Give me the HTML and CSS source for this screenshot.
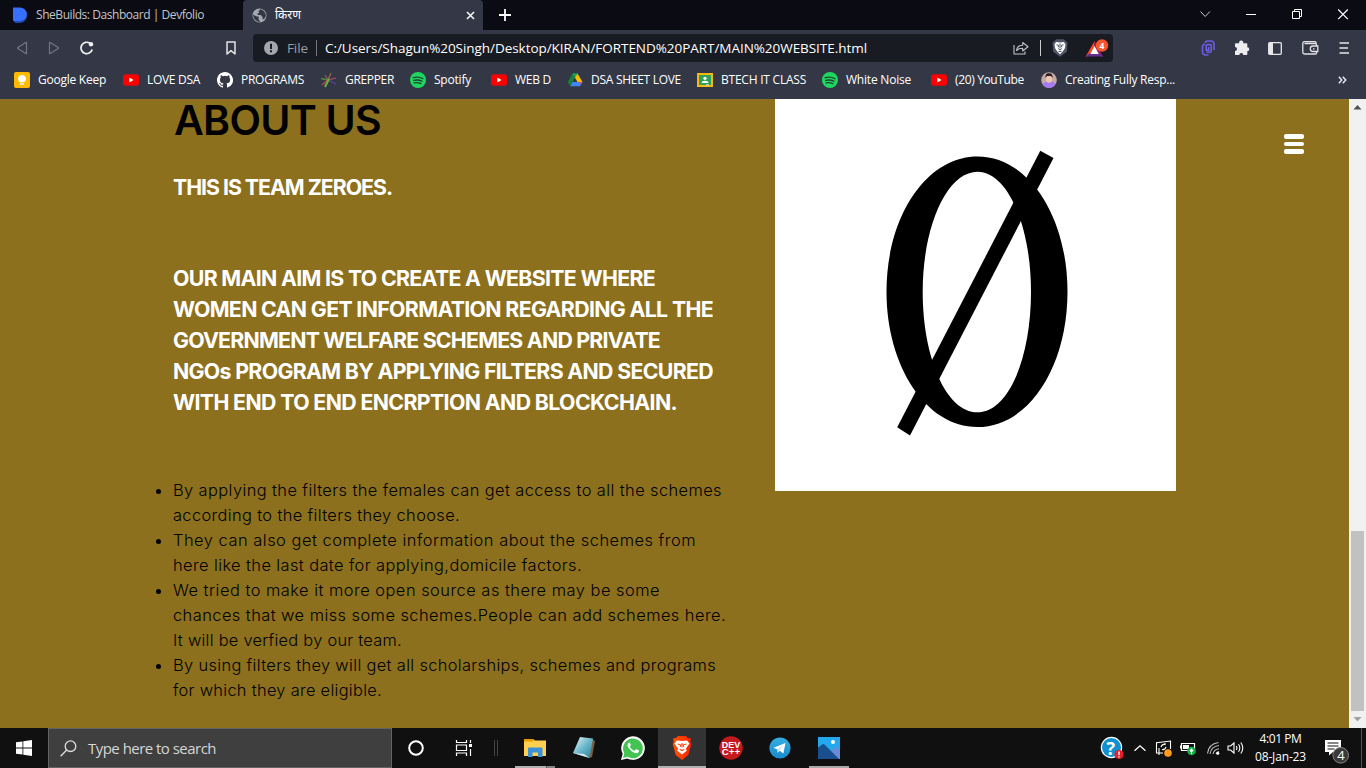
FILE: index.html
```html
<!DOCTYPE html>
<html lang="en">
<head>
<meta charset="utf-8">
<title>किरण</title>
<link rel="stylesheet" href="styles.css">
</head>
<body>
<svg class="defs" width="0" height="0" aria-hidden="true">
  <symbol id="youtube" viewBox="0 0 16 16"><rect y="2.2" width="16" height="11.6" rx="3" fill="#f00"/><path d="M6.3 5.6v4.8L10.6 8z" fill="#fff"/></symbol>
  <symbol id="spotify" viewBox="0 0 16 16"><circle cx="8" cy="8" r="8" fill="#1ed760"/><path d="M3.2 5.7c3.3-1 6.800-.7 9.600.9M3.700 8.400c2.900-.8 5.700-.5 8.200.8M4.100 10.900c2.300-.6 4.700-.3 6.800.8" fill="none" stroke="#24432f" stroke-width="1.400" stroke-linecap="round"/></symbol>
</svg>

<div class="tabs">
  <div class="tab">
    <svg width="16" height="16" viewBox="0 0 16 16"><path d="M2 1h6.500a6.500 6.500 0 0 1 6.500 6.500A7.500 7.500 0 0 1 8 16H3L1 13z" fill="#204bb5"/><path d="M1 .5h7a6.500 6.500 0 0 1 0 13.500H2.500A1.500 1.500 0 0 1 1 12.500z" fill="#3770ff"/></svg>
    <span class="fit" data-w="168">SheBuilds: Dashboard | Devfolio</span>
  </div>
  <div class="tab active">
    <svg width="15" height="15" viewBox="0 0 15 15"><circle cx="7.500" cy="7.500" r="7" fill="#a6a9b1"/><path d="M8.500 1.200 6.500 3l.7 1.700-2 .8L6 7h2.800l1.700 2 .2 2.500 2.100-1.300L14 7.500C13.500 4.200 11.500 2 8.500 1.200zM1 6.500l3.200 1.800 2.600.5-.3 2.500 1.800 2.700C4.500 14 1.200 11 1 6.500z" fill="#343746"/></svg>
    <span class="fit hindi" data-w="28">किरण</span>
    <svg class="close" width="9" height="9" viewBox="0 0 9 9"><path d="m1 1 7 7M8 1 1 8" stroke="#f1f1f3" stroke-width="1.700"/></svg>
  </div>
  <svg class="new-tab" width="12" height="12" viewBox="0 0 12 12"><path d="M6 0v12M0 6h12" stroke="#fff" stroke-width="1.800"/></svg>
  <div class="window-controls">
    <svg width="46" height="30" viewBox="0 0 46 30"><path d="m18.500 11.500 4.700 5 4.700-5" fill="none" stroke="#c5c6cb"/></svg>
    <svg width="46" height="30" viewBox="0 0 46 30"><path d="M18 14.500h10" stroke="#fff"/></svg>
    <svg width="46" height="30" viewBox="0 0 46 30"><path d="M18.500 11.500h7v7h-7zM20.500 11.500v-2h7v7h-2" fill="none" stroke="#fff"/></svg>
    <svg width="46" height="30" viewBox="0 0 46 30"><path d="m18.200 9.500 9.600 9.600M27.800 9.500l-9.600 9.600" stroke="#fff" stroke-width="1.200"/></svg>
  </div>
</div>

<div class="toolbar">
  <div class="nav">
    <svg width="12" height="14" viewBox="0 0 12 14"><path d="M10.500 1.800v10.400q0 .8-.7.400L1.800 7.400q-.6-.4 0-.8l8-5.200q.7-.4.7.4z" fill="none" stroke="#74767f" stroke-width="1.200"/></svg>
    <svg width="12" height="14" viewBox="0 0 12 14"><path d="M1.500 1.800v10.400q0 .8.7.4l8-5.200q.6-.4 0-.8l-8-5.200q-.7-.4-.7.4z" fill="none" stroke="#74767f" stroke-width="1.200"/></svg>
    <svg width="14" height="14" viewBox="0 0 14 14"><path d="M12.200 8.500A5.700 5.700 0 1 1 10 2.300" fill="none" stroke="#f0f0f2" stroke-width="1.700"/><circle cx="11" cy="3.200" r="2.200" fill="#f0f0f2"/></svg>
  </div>
  <svg class="bookmark-icon" width="10" height="14" viewBox="0 0 10 14"><path d="M1 1h8v12L5 9.700 1 13z" fill="none" stroke="#e3e3e6" stroke-width="1.500" stroke-linejoin="round"/></svg>
  <div class="address">
    <svg width="14" height="14" viewBox="0 0 14 14"><circle cx="7" cy="7" r="7" fill="#a4a7ae"/><path d="M7 2.700v5.400M7 9.200v2" stroke="#191b22" stroke-width="2"/></svg>
    <span class="fit scheme" data-w="21">File</span>
    <i class="rule"></i>
    <span class="fit url" data-w="542">C:/Users/Shagun%20Singh/Desktop/KIRAN/FORTEND%20PART/MAIN%20WEBSITE.html</span>
    <div class="address-actions">
      <svg width="16" height="14" viewBox="0 0 16 14"><path d="M1 4v9h11v-2.500M3.500 9.500C4 6 6.500 4.300 9.700 4.300V1.500L15 5.700 9.700 10V7.300C7 7.200 5 8 3.500 9.500z" fill="none" stroke="#c2c3c7" stroke-width="1.100" stroke-linejoin="round"/></svg>
      <i class="rule"></i>
      <svg width="16" height="18" viewBox="0 0 16 18"><path d="m2.500 1.800 2-1.500h7l2 1.500 2 2-.7 9L8 17.700 1.200 12.800l-.7-9z" fill="#525565"/><path d="M4.200 3 8 3.500l3.800-.5 1.700 2.200-.6 4-2.200 3.300L8 15.300l-2.700-2.800-2.200-3.300-.6-4z" fill="#fff"/><path d="m4.500 5.800 2.200.5-.5 2M11.500 5.800l-2.200.5.500 2M8 4.500v5M6.200 9.600 8 11l1.800-1.400M6.500 12.500h3" stroke="#525565" fill="none" stroke-width="1"/></svg>
      <svg width="24" height="19" viewBox="0 0 24 19"><path d="M9.500 2 9.500 8 5 16 .5 18z" fill="#ff4724"/><path d="M9.500 2v6L14 16l4 2z" fill="#9e1f63"/><path d="M.5 17.500 5 14h9l4.500 3.500z" fill="#662d91"/><path d="m9.500 7 4.200 8H5.300z" fill="#fff"/><circle cx="17" cy="6.500" r="6.200" fill="#fb542b"/><text x="14.600" y="9.500" class="badge">4</text></svg>
    </div>
  </div>
  <div class="extensions">
    <svg width="14" height="16" viewBox="0 0 14 16"><path d="M5.300 12.200H9q1.300 0 1.300-1.300V6Q10.300 4.600 9 4.600H6.500Q5.200 4.600 5.200 6v4.100h2.500V7M4.200 3.200Q4.500 1 6.700 1h3Q13 1 13 4.300V10M4 4.200Q1.500 4.200 1.500 7v4.500Q1.500 15 5 15h2.500" fill="none" stroke="#6b5ce7" stroke-width="1.600"/></svg>
    <svg width="16" height="16" viewBox="0 0 16 16"><path d="M1 4q0-.8.800-.8h3.400a2.100 2.100 0 1 1 4 0h3.300q.8 0 .8.800v3.300a2 2 0 1 1 0 4v3q0 .8-.8.8H9.300a2 2 0 1 0-4 0H1.800q-.8 0-.8-.8v-3.200a2 2 0 1 0 0-4z" fill="#ededef"/></svg>
    <svg width="14" height="13" viewBox="0 0 14 13"><rect x=".7" y=".7" width="12.600" height="11.600" rx="1" fill="none" stroke="#e7e7e9" stroke-width="1.300"/><path d="M1 1h4v11H1z" fill="#e7e7e9"/></svg>
    <svg width="17" height="14" viewBox="0 0 17 14"><path d="M14.500 5V3.500q0-1-1-1H2.500M14 2.500V1.700q0-1-1-1H2.500Q.8.700.8 2.500v8.700q0 1.800 1.700 1.800h11q1 0 1-1v-1M15.800 5H11a2.700 2.700 0 0 0 0 5.500h4.800zM11 7.800h1.500" fill="none" stroke="#e1e1e4" stroke-width="1.300"/></svg>
    <svg width="10" height="12" viewBox="0 0 10 12"><path d="M.5 1h9.500M.5 6H9M.5 11h9.500" stroke="#e6e6e8" stroke-width="1.500"/></svg>
  </div>
</div>

<div class="bookmarks">
  <div class="mark"><svg width="16" height="16" viewBox="0 0 16 16"><rect width="16" height="16" rx="2" fill="#ffba00"/><path d="M8 3a4 4 0 0 0-2.200 7.300h4.400A4 4 0 0 0 8 3zM6 11.300h4v1.500H6z" fill="#fff"/></svg><span class="fit" data-w="68">Google Keep</span></div>
  <div class="mark"><svg width="16" height="16"><use href="#youtube"/></svg><span class="fit" data-w="53">LOVE DSA</span></div>
  <div class="mark"><svg width="16" height="16" viewBox="0 0 16 16"><path d="M8 0C3.580 0 0 3.580 0 8c0 3.540 2.290 6.530 5.470 7.590.4.070.55-.17.55-.38v-1.490c-2.010.37-2.530-.49-2.690-.94-.09-.23-.48-.94-.82-1.130-.28-.15-.68-.52-.01-.53.63-.01 1.080.58 1.230.82.72 1.210 1.870.87 2.330.66.07-.52.28-.87.51-1.070-1.780-.2-3.640-.89-3.640-3.950 0-.87.31-1.590.82-2.150-.08-.2-.36-1.020.08-2.120 0 0 .67-.21 2.200.82a7.400 7.400 0 0 1 4 0c1.530-1.040 2.200-.82 2.200-.82.44 1.100.16 1.920.08 2.120.51.56.82 1.270.82 2.150 0 3.070-1.870 3.750-3.650 3.950.29.25.54.73.54 1.480v2.200c0 .21.15.46.55.38A8 8 0 0 0 8 0z" fill="#fff"/></svg><span class="fit" data-w="63">PROGRAMS</span></div>
  <div class="mark"><svg width="16" height="16" viewBox="0 0 16 16"><g fill="none" stroke-width="1.300"><path d="m7 8 3-7" stroke="#8a7138"/><path d="M7 8 4 3" stroke="#9f4e7a"/><path d="M7 8 0 6.500" stroke="#4c8f3a"/><path d="m7 8 8-2" stroke="#914364"/><path d="m7 8 8 4" stroke="#5a49a0"/><path d="M8 7 1 13" stroke="#b54d55"/><path d="m8 7-4 8" stroke="#68b441" stroke-width="2"/></g></svg><span class="fit" data-w="49">GREPPER</span></div>
  <div class="mark"><svg width="16" height="16"><use href="#spotify"/></svg><span class="fit" data-w="37">Spotify</span></div>
  <div class="mark"><svg width="16" height="16"><use href="#youtube"/></svg><span class="fit" data-w="36">WEB D</span></div>
  <div class="mark"><svg width="16" height="16" viewBox="0 0 16 16"><path d="M5.500 1.500h5L8 5.800 3.300 14 .8 10z" fill="#188038"/><path d="M5.500 1.500h5L8 6z" fill="#1ea362"/><path d="M10.500 1.500 15.500 10h-5L8 5.800z" fill="#fbbc04"/><path d="M5.500 10h10L13 14.200H3.300z" fill="#4285f4"/><path d="m12.500 10h3L14 12.600z" fill="#ea4335"/></svg><span class="fit" data-w="90">DSA SHEET LOVE</span></div>
  <div class="mark"><svg width="16" height="16" viewBox="0 0 16 16"><path d="M0 1h16v14H0z" fill="#f5b912"/><path d="M2 3h12v10H2z" fill="#2da05a"/><circle cx="8" cy="6.300" r="1.600" fill="#fff"/><path d="M4.500 11q.3-2.200 3.500-2.200t3.500 2.200z" fill="#fff"/><path d="M9 12.500h3v.8H9z" fill="#fff"/></svg><span class="fit" data-w="85">BTECH IT CLASS</span></div>
  <div class="mark"><svg width="16" height="16"><use href="#spotify"/></svg><span class="fit" data-w="65">White Noise</span></div>
  <div class="mark"><svg width="16" height="16"><use href="#youtube"/></svg><span class="fit" data-w="69">(20) YouTube</span></div>
  <div class="mark"><svg width="16" height="16" viewBox="0 0 16 16"><circle cx="8" cy="8" r="7.800" fill="#c3a9a5"/><path d="M1.500 12q2-2.500 4.500-2.500h4q3 0 4.500 2.500A8 8 0 0 1 8 16a8 8 0 0 1-6.500-4z" fill="#a77cf2"/><ellipse cx="8" cy="6.800" rx="3" ry="4" fill="#efc5ae"/><path d="M4.500 6Q4 1 8 1.200T11.500 6L10 4H6z" fill="#291c23"/></svg><span class="fit" data-w="110">Creating Fully Resp...</span></div>
  <svg class="more" width="9" height="8" viewBox="0 0 9 8"><path d="m.8.8 3 3.200-3 3.200M4.800.8l3 3.200-3 3.200" fill="none" stroke="#ededef" stroke-width="1.400"/></svg>
</div>

<div class="viewport">
  <main class="page">
    <section class="about">
      <h1><span class="fit" data-w="207">ABOUT US</span></h1>
      <h3><span class="fit" data-w="219">THIS IS TEAM ZEROES.</span></h3>
      <h3 class="aim">
        <span class="fit" data-w="482">OUR MAIN AIM IS TO CREATE A WEBSITE WHERE</span>
        <span class="fit" data-w="540">WOMEN CAN GET INFORMATION REGARDING ALL THE</span>
        <span class="fit" data-w="487">GOVERNMENT WELFARE SCHEMES AND PRIVATE</span>
        <span class="fit" data-w="540">NGOs PROGRAM BY APPLYING FILTERS AND SECURED</span>
        <span class="fit" data-w="504">WITH END TO END ENCRPTION AND BLOCKCHAIN.</span>
      </h3>
      <ul>
        <li><span class="fit" data-w="549">By applying the filters the females can get access to all the schemes</span><br><span class="fit" data-w="287">according to the filters they choose.</span></li>
        <li><span class="fit" data-w="523">They can also get complete information about the schemes from</span><br><span class="fit" data-w="409">here like the last date for applying,domicile factors.</span></li>
        <li><span class="fit" data-w="487">We tried to make it more open source as there may be some</span><br><span class="fit" data-w="553">chances that we miss some schemes.People can add schemes here.</span><br><span class="fit" data-w="229">It will be verfied by our team.</span></li>
        <li><span class="fit" data-w="543">By using filters they will get all scholarships, schemes and programs</span><br><span class="fit" data-w="209">for which they are eligible.</span></li>
      </ul>
    </section>
    <svg class="team-logo" viewBox="775 99 401 392"><path fill="#000" fill-rule="evenodd" d="M886.500 291.700C886.500 217 926 156.500 977.500 156.500S1067.500 217 1067.500 291.700 1029 427 977.500 427 886.500 366 886.500 291.700zM922.700 291.700C922.700 357 946 412.300 977.500 412.300S1031 357 1031 291.700 1008 171.700 977.500 171.700 922.700 226 922.700 291.700z"/><path d="M1040.300 150.700 1053.500 158 910 435.500 897.200 427.300z"/></svg>
    <div class="menu"><i></i><i></i><i></i></div>
  </main>
  <div class="scrollbar">
    <svg width="17" height="17" viewBox="0 0 17 17"><path d="m8.500 6 4 4.500h-8z" fill="#505050"/></svg>
    <div class="thumb"></div>
    <svg width="17" height="17" viewBox="0 0 17 17"><path d="m8.500 10.500 4-4.500h-8z" fill="#a3a3a3"/></svg>
  </div>
</div>

<div class="taskbar">
  <div class="start"><svg width="16" height="16" viewBox="0 0 16 16"><path d="M0 2.300 6.500 1.400v6.200H0zM7.300 1.300 16 0v7.600H7.300zM0 8.400h6.500v6.200L0 13.700zM7.300 8.400H16V16l-8.700-1.300z" fill="#fff"/></svg></div>
  <div class="search">
    <svg width="17" height="17" viewBox="0 0 17 17"><circle cx="10.500" cy="6.200" r="5.300" fill="none" stroke="#ddd" stroke-width="1.300"/><path d="M6.700 10 .6 16.300" stroke="#ddd" stroke-width="1.300"/></svg>
    <span class="fit" data-w="128">Type here to search</span>
  </div>
  <div class="slot"><svg width="18" height="18" viewBox="0 0 18 18"><circle cx="9" cy="9" r="6.800" fill="none" stroke="#fff" stroke-width="2"/></svg></div>
  <div class="slot"><svg width="18" height="16" viewBox="0 0 18 16"><path d="M1.500 0v2.500h10V0M1.500 16v-3h10v3M1.500 5h10v5.500h-10zM15.500 0v3M15.500 9v7" fill="none" stroke="#fff" stroke-width="1.200"/><path d="M14 4h3v3h-3z" fill="#fff"/></svg></div>
  <div class="divider"></div>
  <div class="apps">
    <div class="app open multi"><svg width="22" height="20" viewBox="0 0 22 20"><path d="M0 1h9.500l1.500 2H0z" fill="#e69b00"/><path d="M0 2.500h22V18H0z" fill="#ffcf50"/><path d="M0 1.500h9v2H0z" fill="#e69b00"/><path d="M4 10.500q0-1 1-1h12.500q1 0 1 1V19H14v-4.500H8.500V19H4z" fill="#3b91d8"/></svg></div>
    <div class="app"><svg width="24" height="22" viewBox="0 0 24 22"><defs><linearGradient id="pad" x2="1" y2="1"><stop stop-color="#effafc"/><stop offset=".5" stop-color="#6db9cc"/><stop offset="1" stop-color="#257f98"/></linearGradient></defs><path d="m20 2 3 2-3 16-3 1z" fill="#7a6040"/><path d="M8 0 21 1.500 17.500 21 1 16z" fill="url(#pad)"/><path d="m1 16 11 1 5.500 4z" fill="#dce9ec"/></svg></div>
    <div class="app"><svg width="24" height="24" viewBox="0 0 24 24"><path d="m0 24 1.700-6.200A11.800 11.800 0 1 1 6.300 22.400z" fill="#fff"/><path d="m2 22 1.300-4.700a9.900 9.900 0 1 1 3.400 3.500z" fill="#41c452"/><path d="M8.400 6.600q-.5-.1-1 .4-1 1.200-.9 2.500.4 2.900 4.200 5.800 3.500 2.600 5.600 1.800 1.700-.7 1.700-2.100.1-.5-.4-.7l-2.100-1q-.5-.2-.8.200l-.9 1.100q-.3.300-.7.100Q10.400 13.500 9 10.900q-.2-.4.100-.7l.7-.9q.2-.3 0-.7l-.8-1.700q-.2-.3-.6-.3z" fill="#fff"/></svg></div>
    <div class="app open current"><svg width="20" height="24" viewBox="0 0 20 24"><defs><linearGradient id="lion"><stop stop-color="#ff5500"/><stop offset="1" stop-color="#ff2000"/></linearGradient></defs><path d="m4 2 2-2h8l2 2 3 .5L18.300 6l1 2-3 11-6.300 5-6.300-5-3-11 1-2L1 2.500z" fill="url(#lion)"/><path d="M5 4.500 10 5l5-.5 2.500 3L14 12.500l.7 2.300L10 18.500l-4.700-3.700.7-2.300L2.500 7.500z" fill="#fff"/><path d="m5.500 8 3.200.8-.5 2M14.500 8l-3.200.8.5 2M10 7v4.500M7.700 13.200l2.300 1.300 2.300-1.300" fill="none" stroke="#ff4b13" stroke-width="1.100"/></svg></div>
    <div class="app"><svg width="24" height="24" viewBox="0 0 24 24"><circle cx="12" cy="12" r="11.700" fill="#c51a1c"/><text class="dev" x="2.800" y="11.500" textLength="18.400" lengthAdjust="spacingAndGlyphs">DEV</text><text class="dev" x="2.800" y="19" textLength="18.400" lengthAdjust="spacingAndGlyphs">C++</text></svg></div>
    <div class="app"><svg width="22" height="22" viewBox="0 0 22 22"><defs><linearGradient id="plane" x2="0" y2="1"><stop stop-color="#37aee2"/><stop offset="1" stop-color="#168acd"/></linearGradient></defs><circle cx="11" cy="11" r="10.600" fill="url(#plane)"/><path d="m4.500 10.800 12-4.800-2.200 10.400-3.600-2.600-1.900 1.900-.4-3.200z" fill="#fff"/><path d="m8.400 12.500 6-4.500-4.300 5.100-1.300 2.600z" fill="#b6d9ea"/></svg></div>
    <div class="app open"><svg width="22" height="22" viewBox="0 0 22 22"><path d="M0 0h22v22H0z" fill="#24a8ed"/><path d="M10 17 17 10.500q1-1 2 0l3 3V22H10z" fill="#6a8bd8"/><path d="M0 10.500 4 7.500q1.500-1 3 .5L21 22H0z" fill="#194f8f"/><circle cx="15" cy="5" r="2" fill="#fff"/></svg></div>
  </div>
  <div class="tray">
    <svg width="24" height="24" viewBox="0 0 24 24"><circle cx="11.500" cy="11.500" r="10.700" fill="#fff"/><circle cx="11.500" cy="11.500" r="9.500" fill="#1190d0"/><text x="6.500" y="18.500" class="help">?</text><circle cx="19" cy="18.500" r="4.600" fill="#e81c2a"/><path d="M19 15.500v3.800M19 20.300v1.300" stroke="#fff" stroke-width="1.400"/></svg>
    <svg width="12" height="8" viewBox="0 0 12 8"><path d="m.5 6.800 5.500-5 5.500 5" fill="none" stroke="#fff" stroke-width="1.300"/></svg>
    <svg width="17" height="18" viewBox="0 0 17 18"><path d="M8 14H1.500V3.700L15.500 2v8M4 16V9" fill="none" stroke="#fff" stroke-width="1.100"/><path d="M6 8q1-3 4-2.500V4M11 8q-1 3-4 2.500" fill="none" stroke="#fff" stroke-width="1.100"/><circle cx="13" cy="14" r="3.800" fill="#ff9b17"/></svg>
    <svg width="16" height="16" viewBox="0 0 16 16"><path d="M1.500 3.500h13v7h-13zM.5 5.500v3" fill="none" stroke="#fff" stroke-width="1.200"/><path d="M3 5h6v4H3z" fill="#fff"/><circle cx="11.500" cy="11" r="4.300" fill="#18ad49"/><path d="m11.500 8.300 2 2.500-2 1.800-2-1.800z" fill="#fff"/><path d="M11.500 12v2" stroke="#fff"/></svg>
    <svg width="14" height="14" viewBox="0 0 14 14"><path d="M1.500 12.500q1-9.500 11-11M4 13q1-7.500 9-8.500M7 13q.8-4.500 6-5.300M10 13q.5-2 3-2.500" fill="none" stroke="#bbb" stroke-width="1.100"/><circle cx="11.800" cy="12.200" r="1.500" fill="#fff"/></svg>
    <svg width="17" height="14" viewBox="0 0 17 14"><path d="M1 5h2.500L7 2v10L3.500 9H1zM9.300 5q1.200 2 0 4M11.500 3.200q2.600 3.800 0 7.600M13.800 1.500q4 5.500 0 11" fill="none" stroke="#fff" stroke-width="1.100"/></svg>
  </div>
  <div class="clock"><span class="fit" data-w="42">4:01 PM</span><span class="fit" data-w="51">08-Jan-23</span></div>
  <div class="notice"><svg width="26" height="26" viewBox="0 0 26 26"><path d="M1 2h16v12H9l-4 3.500V14H1z" fill="#fff"/><path d="M3.500 5h11M3.500 8h11M3.500 11h7" stroke="#111"/><circle cx="16.700" cy="17.300" r="7.800" fill="#393939" stroke="#868686"/><text x="13.200" y="22" class="count">4</text></svg></div>
</div>
<script src="fit.js"></script>
</body>
</html>
```
FILE: styles.css
```css
* { box-sizing: border-box; }
body { margin: 0; width: 1366px; height: 768px; overflow: hidden; display: flex; flex-direction: column; font: 12px "Open Sans", "Noto Sans", sans-serif; color: #fff; background: #33363f; }
svg { flex: none; display: block; }
.defs { position: absolute; }
.fit { display: inline-block; white-space: nowrap; }

.tabs { height: 30px; flex: none; display: flex; align-items: center; background: #0b0b14; }
.tab { height: 30px; width: 243px; padding-left: 12px; display: flex; align-items: center; gap: 8px; color: #c4c5c8; }
.tab.active { width: 240px; padding: 0 8px 0 9px; background: #343746; border-radius: 4px 4px 0 0; color: #fff; }
.tab .fit { margin-top: -1px; }
.close { margin-left: auto; }
.new-tab { margin-left: 16px; }
.window-controls { display: flex; margin-left: auto; }

.toolbar { height: 36px; flex: none; display: flex; align-items: center; background: #343746; }
.nav { display: flex; gap: 20px; padding-left: 16px; width: 226px; align-items: center; }
.address { height: 28px; width: 860px; margin-left: 17px; padding: 0 4px 0 11px; display: flex; align-items: center; background: #191b22; border-radius: 4px; font-size: 13.500px; }
.scheme { margin-left: 9px; color: #9b9da3; }
.rule { width: 1px; height: 16px; background: #75777e; }
.scheme + .rule { margin: 0 8px 0 8px; }
.bookmark-icon { width: 10px; }
.address-actions { display: flex; align-items: center; margin-left: auto; gap: 11px; }
.address-actions .rule { background: #cccdd0; }
.address-actions svg:first-child { margin-left: -1px; }
.address-actions svg:last-child { margin-left: 6px; }
.badge { font: 700 8.500px "Open Sans", sans-serif; fill: #fff; }
.extensions { display: flex; align-items: center; margin-left: auto; padding-right: 17px; gap: 18px; }
.extensions svg:nth-child(1) { margin-right: 1px; }
.extensions svg:nth-child(3), .extensions svg:nth-child(4) { margin-right: 2px; }

.bookmarks { height: 33px; flex: none; display: flex; align-items: center; padding: 0 0 5px 14px; background: #343746; }
.mark { display: flex; align-items: center; gap: 8px; margin-right: 17px; }
.mark .fit { margin-top: -1px; }
.mark:nth-child(4), .mark:nth-child(6), .mark:nth-child(7), .mark:nth-child(8) { margin-right: 16px; }
.mark:nth-child(5), .mark:nth-child(9) { margin-right: 20px; }
.more { margin: 0 19px 0 auto; }

.viewport { flex: 1; display: flex; min-height: 0; background: #8c701d; }
.page { width: 1349px; display: flex; }
.about { width: 775px; padding-left: 173px; color: #000; }
h1, h3, ul { font-family: Inter, sans-serif; margin: 0; }
h1 { font-size: 41px; font-weight: 600; line-height: 50px; height: 50px; margin-top: -4px; padding-left: 1px; }
h3 { color: #fff; font-size: 21.300px; font-weight: 700; line-height: 31px; margin-top: 27px; height: 31px; }
.aim { margin-top: 60px; display: flex; flex-direction: column; align-items: flex-start; height: auto; }
ul { padding: 0; margin-top: 60px; font-size: 16.400px; font-weight: 300; line-height: 25px; }
li { height: 50px; }
li:nth-child(3) { height: 75px; }
li .fit { vertical-align: top; }
.team-logo { width: 401px; height: 392px; background: #fff; }
.menu { margin: 35px 0 0 108px; width: 20px; height: 20px; display: flex; flex-direction: column; gap: 3px; }
.menu i { flex: 1; background: #fff; border-radius: 2px; }
.scrollbar { width: 17px; background: #f1f1f1; display: flex; flex-direction: column; }
.thumb { width: 13px; height: 180px; margin: auto 2px 0; background: #c1c1c1; }

.taskbar { height: 40px; flex: none; display: flex; align-items: center; background: #101010; }
.start { width: 48px; padding-left: 16px; }
.search { width: 344px; height: 40px; border: 1px solid #646464; background: #3f3f3f; display: flex; align-items: center; padding-left: 11px; gap: 11px; font-size: 15px; color: #d6d6d6; }
.slot { width: 48px; display: flex; justify-content: center; }
.divider { width: 4px; height: 16px; margin-left: 6px; border: solid #444; border-width: 0 1px; }
.apps { display: grid; grid-template-columns: repeat(7, 49px); margin-left: 12px; }
.app { height: 40px; display: flex; align-items: center; justify-content: center; }
.app.open { background: linear-gradient(#a9a9a9, #a9a9a9) 5px 38px / 40px 2px no-repeat; }
.app.multi { background: linear-gradient(90deg, #b0b0b0 31px, #555 31px 32px, #858585 32px) 5px 38px / 40px 2px no-repeat; }
.app.current { margin-left: 1px; background: #333; border-bottom: 2px solid #b0b0b0; padding-top: 2px; }
.dev { font: 700 8.500px "Liberation Sans", sans-serif; fill: #fff; }
.tray { display: flex; align-items: center; margin-left: auto; gap: 10px; }
.tray svg:nth-child(2), .tray svg:nth-child(3) { margin-left: -1px; }
.tray svg:nth-child(1) { margin-right: 1px; }
.tray svg:nth-child(4) { margin-left: -2px; }
.tray svg:nth-child(6) { margin-left: -3px; }
.help { font: 700 18px "Open Sans", sans-serif; fill: #fff; }
.clock { display: flex; flex-direction: column; align-items: center; width: 51px; margin-left: 11px; line-height: 18px; }
.notice { width: 60px; height: 40px; margin: 0 4px 0 -4px; padding: 10px 0 0 22px; border-right: 1px solid #555; }
.count { font: 13px "Open Sans", sans-serif; fill: #fff; }
```
FILE: fit.js
```js
// Tracks each label so that it fills the width given in data-w.
document.querySelectorAll('.fit').forEach(function (el) {
  var target = Number(el.dataset.w);
  var natural = el.getBoundingClientRect().width;
  if (!el.classList.contains('hindi')) {
    el.style.letterSpacing = (target - natural) / el.textContent.length + 'px';
  }
  el.style.width = target + 'px';
});
```
